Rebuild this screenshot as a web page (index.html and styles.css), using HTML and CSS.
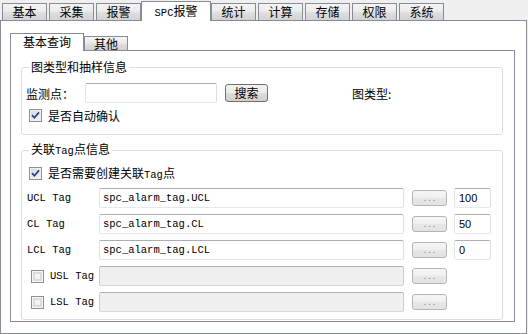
FILE: index.html
```html
<!DOCTYPE html>
<html lang="zh-CN">
<head>
    <meta charset="UTF-8">
    <title>SPC报警</title>
    <link rel="stylesheet" href="styles.css">
</head>
<body>
    <div class="tabs">
        <div class="tab">基本</div>
        <div class="tab">采集</div>
        <div class="tab">报警</div>
        <div class="tab active"><span class="latin">SPC</span>报警</div>
        <div class="tab">统计</div>
        <div class="tab">计算</div>
        <div class="tab">存储</div>
        <div class="tab">权限</div>
        <div class="tab">系统</div>
    </div>

    <div class="frame">
        <div class="subtabs">
            <div class="subtab active">基本查询</div>
            <div class="subtab">其他</div>
        </div>

        <div class="subpanel">
            <!-- 图类型和抽样信息 -->
            <fieldset class="group group-chart">
                <legend>图类型和抽样信息</legend>
                <div class="search-row">
                    <span class="point-label">监测点：</span>
                    <input class="field point-field" type="text">
                    <button class="btn search-btn">搜索</button>
                    <span class="type-label">图类型:</span>
                </div>
                <div class="check-row">
                    <span class="cb"><svg width="11" height="11" viewBox="0 0 11 11"><path d="M2 5.2 L4.4 7.8 L9 2.4" fill="none" stroke="#24438a" stroke-width="1.7"/></svg></span>
                    <span>是否自动确认</span>
                </div>
            </fieldset>

            <!-- 关联Tag点信息 -->
            <fieldset class="group group-tag">
                <legend>关联<span class="latin">Tag</span>点信息</legend>
                <div class="check-row">
                    <span class="cb"><svg width="11" height="11" viewBox="0 0 11 11"><path d="M2 5.2 L4.4 7.8 L9 2.4" fill="none" stroke="#24438a" stroke-width="1.7"/></svg></span>
                    <span>是否需要创建关联<span class="latin">Tag</span>点</span>
                </div>
                <div class="tag-grid">
                    <span class="tag-label latin">UCL Tag</span>
                    <input class="field tag-field" type="text" value="spc_alarm_tag.UCL">
                    <button class="btn dots">...</button>
                    <input class="field num-field" type="text" value="100">

                    <span class="tag-label latin">CL Tag</span>
                    <input class="field tag-field" type="text" value="spc_alarm_tag.CL">
                    <button class="btn dots">...</button>
                    <input class="field num-field" type="text" value="50">

                    <span class="tag-label latin">LCL Tag</span>
                    <input class="field tag-field" type="text" value="spc_alarm_tag.LCL">
                    <button class="btn dots">...</button>
                    <input class="field num-field" type="text" value="0">

                    <span class="tag-label with-cb"><span class="cb off"></span><span class="latin">USL Tag</span></span>
                    <input class="field tag-field" type="text" disabled>
                    <button class="btn dots">...</button>
                    <span></span>

                    <span class="tag-label with-cb"><span class="cb off"></span><span class="latin">LSL Tag</span></span>
                    <input class="field tag-field" type="text" disabled>
                    <button class="btn dots">...</button>
                    <span></span>
                </div>
            </fieldset>
        </div>
    </div>
</body>
</html>
```

FILE: styles.css
```css
* {
    box-sizing: border-box;
}
body {
    margin: 0;
    width: 528px;
    height: 334px;
    overflow: hidden;
    background: #f0f0f0;
    font-family: "Noto Sans CJK SC", sans-serif;
    font-size: 12px;
    color: #000;
}
.latin {
    font-family: "Liberation Mono", monospace;
    font-size: 10.5px;
}

/* top tabs */
.tabs {
    display: flex;
    align-items: flex-end;
    gap: 2px;
    height: 20px;
    padding-left: 2px;
}
.tab {
    width: 45px;
    height: 17px;
    border: 1px solid #898c95;
    border-bottom: none;
    background: linear-gradient(#f4f4f4, #ececec 45%, #dedede 55%, #d2d2d2);
    text-align: center;
    line-height: 15px;
}
.tab.active {
    position: relative;
    z-index: 1;
    width: 70px;
    height: 20px;
    margin: 0 -2px -1px;
    background: #fff;
    line-height: 17px;
}

.frame {
    width: 527px;
    height: 314px;
    border: 1px solid #898c95;
    background: #fff;
    padding: 12px 0 0 9px;
}

/* inner tabs */
.subtabs {
    display: flex;
    align-items: flex-end;
    height: 17px;
}
.subtab {
    width: 44px;
    height: 14px;
    border: 1px solid #898c95;
    border-bottom: none;
    background: linear-gradient(#f4f4f4, #ececec 45%, #dedede 55%, #d2d2d2);
    text-align: center;
    line-height: 13px;
}
.subtab.active {
    position: relative;
    z-index: 1;
    width: 74px;
    height: 18px;
    margin-bottom: -1px;
    background: #fff;
    line-height: 16px;
}
.subpanel {
    width: 505px;
    height: 272px;
    border: 1px solid #898c95;
    background: #fff;
    padding: 0 11px 0 10px;
}

/* controls */
.btn {
    margin: 0;
    padding: 0;
    border: 1px solid #acacac;
    border-radius: 3px;
    background: linear-gradient(#f2f2f2, #ebebeb 50%, #dddddd 50%, #cfcfcf);
    font-family: inherit;
    color: #000;
}
.field {
    height: 20px;
    margin: 0;
    border: 1px solid;
    border-color: #abadb3 #dbdfe6 #e3e9ef #e2e3ea;
    border-radius: 2px;
    background: #fff;
    padding: 0 3px;
    outline: none;
}

/* group boxes */
.group {
    margin: 0;
    min-width: 0;
    border: 1px solid #d5dfe5;
    border-radius: 3px;
    padding: 9px 0 12px 0;
}
.group legend {
    margin-left: 7px;
    padding: 0 2px;
    line-height: 14px;
}
.group-chart {
    margin-top: 9px;
}
.group-tag {
    margin-top: 7px;
    padding-bottom: 7px;
}

.search-row {
    display: flex;
    align-items: center;
    height: 20px;
    padding-left: 4px;
}
.point-label {
    width: 59px;
}
.point-field {
    width: 132px;
}
.search-btn {
    width: 43px;
    height: 18px;
    margin-left: 8px;
    border-color: #707070;
    font-size: 12px;
    line-height: 14px;
}
.type-label {
    margin-left: 84px;
}

.check-row {
    display: flex;
    align-items: center;
    gap: 6px;
    height: 13px;
    margin: 6px 0 0 7px;
    line-height: 13px;
}
.group-tag .check-row {
    margin-top: 0;
}
.cb {
    flex: none;
    display: flex;
    align-items: center;
    justify-content: center;
    width: 13px;
    height: 13px;
    border: 1px solid #8e8f8f;
    background: linear-gradient(135deg, #d6d6d6, #f6f6f6);
    box-shadow: inset 0 0 0 1px #f2f2f2;
}
.cb.off {
    background: #f4f4f4;
    box-shadow: inset 0 0 0 1px #f8f8f8, inset 0 0 0 3px #dcdcdc;
}

/* tag rows */
.tag-grid {
    display: grid;
    grid-template-columns: 70px 305px 36px 37px;
    grid-auto-rows: 20px;
    column-gap: 7px;
    row-gap: 6px;
    margin-top: 8px;
    align-items: center;
}
.tag-label {
    padding-left: 5px;
    white-space: nowrap;
}
.tag-label.with-cb {
    display: flex;
    align-items: center;
    gap: 6px;
    padding-left: 9px;
}
.tag-field {
    width: 305px;
    font-family: "Liberation Mono", monospace;
    font-size: 10.5px;
    color: #000;
}
.tag-field:disabled {
    background: #f0f0f0;
    border-color: #adb2b5 #c9ccd0 #d5d8dc #c9ccd0;
}
.num-field {
    width: 37px;
    padding-left: 4px;
    font-family: "Liberation Sans", sans-serif;
    font-size: 11px;
}
.dots {
    justify-self: end;
    width: 35px;
    height: 16px;
    border-color: #b4b4b4;
    background: linear-gradient(#f6f6f6, #efefef 50%, #e7e7e7 50%, #e2e2e2);
    font-size: 9px;
    letter-spacing: 2px;
    padding-left: 2px;
    color: #8c8c8c;
    line-height: 12px;
}
```
